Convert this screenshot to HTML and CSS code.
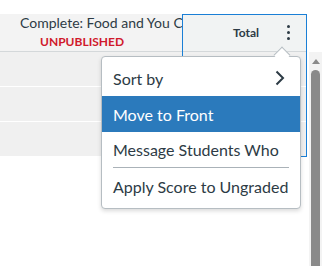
FILE: index.html
```html
<!DOCTYPE html>
<html>
<head>
<meta charset="utf-8">
<link rel="stylesheet" href="styles.css">
</head>
<body>
<div class="page">
  <div class="grid">
    <div class="header">
      <div class="hcell title-cell">
        <div class="title">Complete: Food and You Check</div>
        <div class="status">UNPUBLISHED</div>
      </div>
      <div class="hcell total-cell">
        <span class="total">Total</span>
        <span class="kebab"><i></i><i></i><i></i></span>
      </div>
    </div>
    <div class="row"></div>
    <div class="row"></div>
    <div class="row"></div>
    <div class="col-focus"></div>
  </div>
  <div class="scrollbar">
    <div class="arrow"></div>
    <div class="thumb"></div>
  </div>
  <div class="menu">
    <div class="caret"></div>
    <div class="item item-sub">
      <span>Sort by</span>
      <svg class="chevron" width="10" height="16" viewBox="0 0 10 16"><path d="M1.5 1.5 L8 8 L1.5 14.5" fill="none" stroke="#2d3b45" stroke-width="2"/></svg>
    </div>
    <div class="item active">Move to Front</div>
    <div class="item msg">Message Students Who</div>
    <div class="sep"></div>
    <div class="item">Apply Score to Ungraded</div>
  </div>
</div>
</body>
</html>
```
FILE: styles.css
```css
* { box-sizing: border-box; }
html, body { margin: 0; padding: 0; background: #fff; }
body { font-family: Lato, "Open Sans", sans-serif; color: #2d3b45; }
.page {
  position: relative;
  display: flex;
  align-items: flex-start;
  padding-top: 14px;
  height: 266px;
  overflow: hidden;
}
.grid { position: relative; width: 307px; flex: none; }
.header {
  display: flex;
  height: 38px;
  border-bottom: 1px solid #d4d8da;
  background: #f3f3f3;
}
.hcell { height: 100%; }
.title-cell {
  width: 182px;
  overflow: hidden;
  padding-left: 20px;
}
.title {
  font-size: 14px;
  line-height: 18px;
  white-space: nowrap;
}
.status {
  margin-top: 2px;
  padding-left: 20px;
  font-size: 12px;
  font-weight: 700;
  line-height: 16px;
  color: #d0192c;
}
.total-cell {
  width: 125px;
  display: flex;
  align-items: center;
  justify-content: flex-end;
  padding-right: 17px;
  background: #f1f3f3;
}
.total { font-size: 12px; font-weight: 700; margin-right: 28px; }
.kebab { display: flex; flex-direction: column; gap: 3px; }
.kebab i { display: block; width: 3px; height: 3px; border-radius: 50%; background: #2d3b45; }
.row {
  height: 35px;
  background: #f0f0f0;
  border-bottom: 1px solid #fff;
}
.col-focus {
  position: absolute;
  left: 182px;
  top: 0;
  width: 125px;
  height: 143px;
  border: 1px solid #1a7fd6;
  pointer-events: none;
}
.scrollbar {
  flex: none;
  width: 13px;
  height: 214px;
  margin-top: 38px;
  margin-left: 2px;
  background: #f3f3f3;
  display: flex;
  flex-direction: column;
  align-items: center;
}
.arrow {
  margin-top: 7px;
  width: 0; height: 0;
  border-left: 4px solid transparent;
  border-right: 4px solid transparent;
  border-bottom: 5px solid #8a8a8a;
}
.thumb {
  margin-top: 6px;
  width: 9px;
  flex: 1;
  background: #8a8a8a;
  border-radius: 5px 5px 0 0;
}
.menu {
  position: absolute;
  left: 101px;
  top: 56px;
  width: 200px;
  background: #fff;
  border: 1px solid #b6bdc2;
  border-radius: 4px;
  box-shadow: 0 2px 4px rgba(0,0,0,0.15);
  padding: 3px 0 4px;
}
.caret {
  position: absolute;
  left: 174px;
  top: -8px;
  width: 12px;
  height: 12px;
  background: #fff;
  border-top: 1px solid #b6bdc2;
  border-left: 1px solid #b6bdc2;
  transform: rotate(45deg);
}
.item {
  position: relative;
  height: 36px;
  display: flex;
  align-items: center;
  justify-content: space-between;
  padding: 0 15px 0 11px;
  font-size: 16px;
  white-space: nowrap;
}
.item.msg { height: 35px; }
.item.active { background: #2b7abc; color: #fff; }
.chevron { display: block; }
.sep { height: 1px; margin: 0 11px; background: #aab2b8; }
```
